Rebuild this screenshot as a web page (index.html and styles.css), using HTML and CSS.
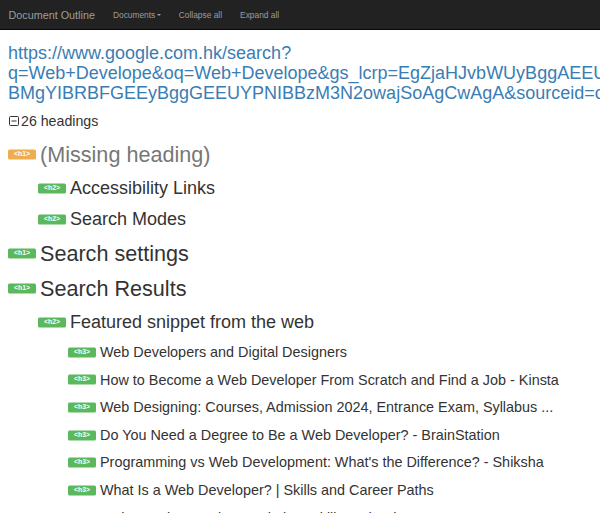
FILE: index.html
```html
<!DOCTYPE html>
<html>
<head>
<meta charset="utf-8">
<title>Document Outline</title>
<link rel="stylesheet" href="styles.css">
</head>
<body>
<nav class="navbar">
  <span class="brand">Document Outline</span>
  <ul class="nav">
    <li>Documents<span class="caret"></span></li>
    <li>Collapse all</li>
    <li>Expand all</li>
  </ul>
</nav>
<main class="content">
  <h3 class="url"><a href="#">https://www.google.com.hk/search?<br>q=Web+Develope&amp;oq=Web+Develope&amp;gs_lcrp=EgZjaHJvbWUyBggAEEUYOTIGCAEQRRg8MgYIAhBFGDwyBggDEEUYPDIGCAQQRRhB<br>BMgYIBRBFGEEyBggGEEUYPNIBBzM3N2owajSoAgCwAgA&amp;sourceid=chrome&amp;ie=UTF-8</a></h3>
  <div class="count">
    <svg class="toggle" width="10" height="10" viewBox="0 0 10 10"><rect x="0.5" y="0.5" width="9" height="9" rx="1" fill="none" stroke="#333" stroke-width="1"/><line x1="2.5" y1="5" x2="7.5" y2="5" stroke="#333" stroke-width="1"/></svg>
    <span>26 headings</span>
  </div>
  <ul class="outline">
    <li>
      <div class="item h1"><span class="badge warn">&lt;h1&gt;</span><span class="text missing">(Missing heading)</span></div>
      <ul>
        <li><div class="item h2"><span class="badge">&lt;h2&gt;</span><span class="text">Accessibility Links</span></div></li>
        <li><div class="item h2"><span class="badge">&lt;h2&gt;</span><span class="text">Search Modes</span></div></li>
      </ul>
    </li>
    <li><div class="item h1"><span class="badge">&lt;h1&gt;</span><span class="text">Search settings</span></div></li>
    <li>
      <div class="item h1"><span class="badge">&lt;h1&gt;</span><span class="text">Search Results</span></div>
      <ul>
        <li>
          <div class="item h2"><span class="badge">&lt;h2&gt;</span><span class="text">Featured snippet from the web</span></div>
          <ul>
            <li><div class="item h3"><span class="badge">&lt;h3&gt;</span><span class="text">Web Developers and Digital Designers</span></div></li>
            <li><div class="item h3"><span class="badge">&lt;h3&gt;</span><span class="text">How to Become a Web Developer From Scratch and Find a Job - Kinsta</span></div></li>
            <li><div class="item h3"><span class="badge">&lt;h3&gt;</span><span class="text">Web Designing: Courses, Admission 2024, Entrance Exam, Syllabus ...</span></div></li>
            <li><div class="item h3"><span class="badge">&lt;h3&gt;</span><span class="text">Do You Need a Degree to Be a Web Developer? - BrainStation</span></div></li>
            <li><div class="item h3"><span class="badge">&lt;h3&gt;</span><span class="text">Programming vs Web Development: What's the Difference? - Shiksha</span></div></li>
            <li><div class="item h3"><span class="badge">&lt;h3&gt;</span><span class="text">What Is a Web Developer? | Skills and Career Paths</span></div></li>
            <li><div class="item h3"><span class="badge">&lt;h3&gt;</span><span class="text">Web Developer Job Description, Skills and Salary</span></div></li>
          </ul>
        </li>
      </ul>
    </li>
  </ul>
</main>
</body>
</html>
```
FILE: styles.css
```css
html, body {
  margin: 0;
  padding: 0;
  overflow: hidden;
  background: #fff;
  font-family: "Liberation Sans", Arial, sans-serif;
  color: #333;
}

.navbar {
  display: flex;
  align-items: center;
  height: 29px;
  background: #222;
  border-bottom: 1px solid #080808;
  padding-left: 8.5px;
  color: #9d9d9d;
}

.brand {
  font-size: 10.8px;
  padding-right: 9px;
}

.nav {
  display: flex;
  list-style: none;
  margin: 0;
  padding: 0;
}

.nav li {
  font-size: 8.4px;
  padding: 0 9px;
  display: flex;
  align-items: center;
}

.caret {
  display: inline-block;
  width: 0;
  height: 0;
  margin-left: 1.5px;
  border-top: 2.5px solid #9d9d9d;
  border-left: 2.5px solid transparent;
  border-right: 2.5px solid transparent;
}

.content {
  padding: 0 0 0 8px;
}

.url {
  margin: 12.5px 0 0;
  font-size: 18px;
  font-weight: normal;
  line-height: 20px;
  white-space: nowrap;
}

.url a {
  color: #3a7db3;
  text-decoration: none;
}

.count {
  display: flex;
  align-items: center;
  gap: 2px;
  margin-top: 8.8px;
  height: 20px;
  font-size: 14.2px;
  padding-left: 1px;
}

.toggle {
  display: block;
}

.outline {
  list-style: none;
  margin: 6px 0 0;
  padding: 0;
}

.outline ul {
  list-style: none;
  margin: 0;
  padding: 0.8px 0 1.6px 30px;
}

.item {
  display: flex;
  align-items: center;
  gap: 4px;
  white-space: nowrap;
  line-height: 1.1;
}

.item.h1 {
  font-size: 21.6px;
  padding: 5.6px 0;
}

.item.h2 {
  font-size: 18px;
  padding: 5.6px 0;
}

.item.h3 {
  font-size: 14.4px;
  padding: 5.9px 0;
}

.badge {
  flex: none;
  display: inline-block;
  width: 28px;
  height: 10px;
  line-height: 10px;
  text-align: center;
  font-size: 6.8px;
  font-weight: bold;
  color: #fff;
  background: #5cb85c;
  border-radius: 1.5px;
  transform: translateY(-0.6px);
}

.badge.warn {
  background: #f0ad4e;
}

.text.missing {
  color: #777;
}
```
